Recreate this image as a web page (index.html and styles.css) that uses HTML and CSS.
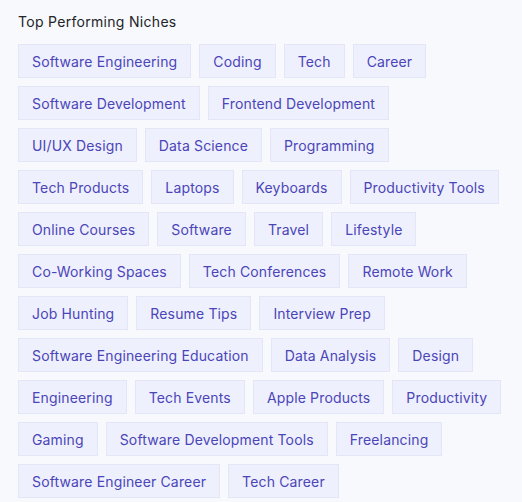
FILE: index.html
```html
<!DOCTYPE html>
<html>
<head>
<meta charset="utf-8">
<link rel="stylesheet" href="styles.css">
</head>
<body>
<section class="niches">
  <h2 class="title">Top Performing Niches</h2>
  <div class="tags">
    <span class="tag">Software Engineering</span>
    <span class="tag">Coding</span>
    <span class="tag">Tech</span>
    <span class="tag">Career</span>
    <span class="tag">Software Development</span>
    <span class="tag">Frontend Development</span>
    <span class="tag">UI/UX Design</span>
    <span class="tag">Data Science</span>
    <span class="tag">Programming</span>
    <span class="tag">Tech Products</span>
    <span class="tag">Laptops</span>
    <span class="tag">Keyboards</span>
    <span class="tag">Productivity Tools</span>
    <span class="tag">Online Courses</span>
    <span class="tag">Software</span>
    <span class="tag">Travel</span>
    <span class="tag">Lifestyle</span>
    <span class="tag">Co-Working Spaces</span>
    <span class="tag">Tech Conferences</span>
    <span class="tag">Remote Work</span>
    <span class="tag">Job Hunting</span>
    <span class="tag">Resume Tips</span>
    <span class="tag">Interview Prep</span>
    <span class="tag">Software Engineering Education</span>
    <span class="tag">Data Analysis</span>
    <span class="tag">Design</span>
    <span class="tag">Engineering</span>
    <span class="tag">Tech Events</span>
    <span class="tag">Apple Products</span>
    <span class="tag">Productivity</span>
    <span class="tag">Gaming</span>
    <span class="tag">Software Development Tools</span>
    <span class="tag">Freelancing</span>
    <span class="tag">Software Engineer Career</span>
    <span class="tag">Tech Career</span>
  </div>
</section>
</body>
</html>
```
FILE: styles.css
```css
html, body {
  margin: 0;
  padding: 0;
  background: #f8f9fc;
}
body {
  font-family: "Inter", "Noto Sans", sans-serif;
}
.niches {
  padding: 12px 18px 0 18px;
}
.title {
  margin: 0 0 12px 0;
  font-size: 14px;
  font-weight: 400;
  line-height: 20px;
  letter-spacing: 0.3px;
  color: #222428;
}
.tags {
  display: flex;
  flex-wrap: wrap;
  gap: 8px;
}
.tag {
  display: inline-flex;
  align-items: center;
  height: 34px;
  box-sizing: border-box;
  padding: 0 13px;
  background: #eef0fd;
  border: 1px solid #e3e6f6;
  color: #4b45b8;
  font-size: 14px;
  letter-spacing: 0.15px;
  white-space: nowrap;
}
```
